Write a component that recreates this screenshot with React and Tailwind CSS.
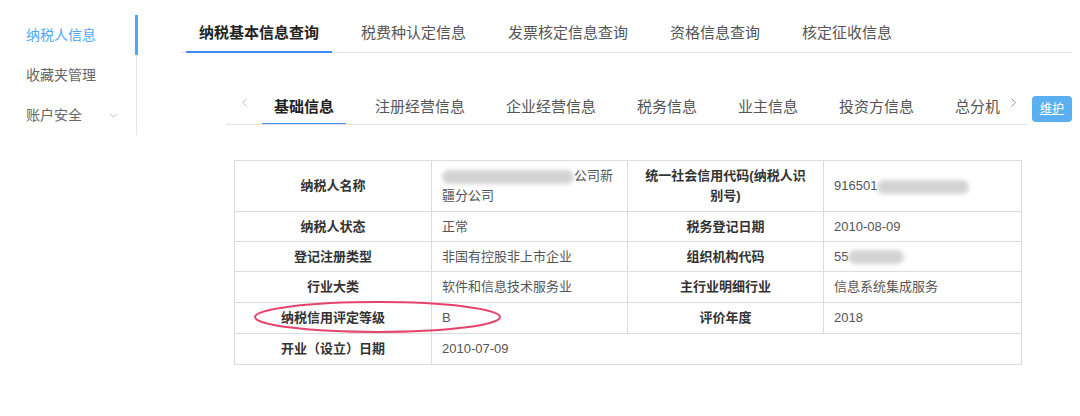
import { ChevronDown, ChevronLeft, ChevronRight } from 'lucide-react'

const FONT = { fontFamily: '"Liberation Sans", "Noto Sans CJK SC", sans-serif' }

const SIDE = [
  { label: '纳税人信息', active: true },
  { label: '收藏夹管理' },
  { label: '账户安全', chevron: true },
]

const TOP_TABS = ['纳税基本信息查询', '税费种认定信息', '发票核定信息查询', '资格信息查询', '核定征收信息']
const SUB_TABS = ['基础信息', '注册经营信息', '企业经营信息', '税务信息', '业主信息', '投资方信息', '总分机构信息']

// blurred stand-in for masked text
function Blur({ w }) {
  return <span className="inline-block h-[14px] align-middle rounded-full bg-[#c9c9c9] blur-[2px] opacity-80" style={{ width: w }} />
}

const label = 'border border-[#dcdcdc] px-[15px] text-center font-bold text-[#333]'
const value = 'border border-[#dcdcdc] px-[10px] text-left text-[#555]'

export default function App() {
  return (
    <div className="flex w-[1080px] h-[416px] bg-white overflow-hidden" style={FONT}>
      {/* Sidebar */}
      <div className="w-[137px] shrink-0 pt-[15px]">
        <div className="border-r border-[#e6e6e6]">
          {SIDE.map(s => (
            <div key={s.label} className={`relative h-[40px] flex items-center pl-[26px] pr-[16px] text-[14px] ${s.active ? 'text-[#4ba9f2]' : 'text-[#666]'}`}>
              {s.label}
              {s.chevron && <ChevronDown size={13} strokeWidth={1.5} className="ml-auto text-[#aaa]" />}
              {s.active && <span className="absolute right-[-2px] top-0 h-full w-[3px] bg-[#4ba9f2]" />}
            </div>
          ))}
        </div>
      </div>

      {/* Main */}
      <div className="flex-1">
        <div className="ml-[44px] w-[891px] flex gap-[16px] pl-[5px] border-b border-[#e4e4e4]">
          {TOP_TABS.map((t, i) => (
            <div key={t} className={`-mb-px px-[13px] pt-[23px] pb-[8px] leading-[20px] text-[15px] border-b-2 ${i === 0 ? 'border-[#3d8ef2] text-[#222] font-bold' : 'border-transparent text-[#555]'}`}>
              {t}
            </div>
          ))}
        </div>

        <div className="mt-[31px] ml-[89px] flex items-start">
          <div className="w-[801px] flex border-b border-[#e4e4e4]">
            <div className="w-[36px] shrink-0 flex items-center justify-center pb-[4px]">
              <ChevronLeft size={15} strokeWidth={1.5} className="text-[#bbb]" />
            </div>
            <div className="w-[738px] overflow-hidden">
              <div className="flex gap-[17px] w-max">
                {SUB_TABS.map((t, i) => (
                  <div key={t} className={`-mb-px px-[12px] pt-[13px] pb-[6px] leading-[20px] text-[15px] border-b-2 ${i === 0 ? 'border-[#3d8ef2] text-[#222] font-bold' : 'border-transparent text-[#555]'}`}>
                    {t}
                  </div>
                ))}
              </div>
            </div>
            <div className="w-[27px] shrink-0 flex items-center justify-center pb-[4px]">
              <ChevronRight size={15} strokeWidth={1.5} className="text-[#888]" />
            </div>
          </div>
          <button className="ml-[5px] mt-[12px] w-[40px] h-[26px] rounded-[4px] bg-[#5aaff0] text-white text-[12px] underline">
            维护
          </button>
        </div>

        {/* Info table */}
        <div className="relative mt-[35px] ml-[97px] w-[787px]">
          <table className="w-[787px] table-fixed border-collapse text-[13px] leading-[20px]">
            <colgroup>
              <col className="w-[197px]" />
              <col className="w-[196px]" />
              <col className="w-[196px]" />
              <col className="w-[198px]" />
            </colgroup>
            <tbody>
              <tr className="h-[51px]">
                <td className={label}>纳税人名称</td>
                <td className={value}><Blur w={132} />公司新疆分公司</td>
                <td className={label}>统一社会信用代码(纳税人识别号)</td>
                <td className={value}>916501<Blur w={92} /></td>
              </tr>
              <tr className="h-[30px]">
                <td className={label}>纳税人状态</td>
                <td className={value}>正常</td>
                <td className={label}>税务登记日期</td>
                <td className={value}>2010-08-09</td>
              </tr>
              <tr className="h-[30px]">
                <td className={label}>登记注册类型</td>
                <td className={value}>非国有控股非上市企业</td>
                <td className={label}>组织机构代码</td>
                <td className={value}>55<Blur w={56} /></td>
              </tr>
              <tr className="h-[31px]">
                <td className={label}>行业大类</td>
                <td className={value}>软件和信息技术服务业</td>
                <td className={label}>主行业明细行业</td>
                <td className={value}>信息系统集成服务</td>
              </tr>
              <tr className="h-[31px]">
                <td className={label}>纳税信用评定等级</td>
                <td className={value}>B</td>
                <td className={label}>评价年度</td>
                <td className={value}>2018</td>
              </tr>
              <tr className="h-[31px]">
                <td className={label}>开业（设立）日期</td>
                <td className={value} colSpan={3}>2010-07-09</td>
              </tr>
            </tbody>
          </table>
          {/* red annotation ellipse */}
          <svg className="absolute left-0 top-0 pointer-events-none" width="787" height="210">
            <ellipse cx="143.5" cy="157" rx="122.5" ry="15" fill="none" stroke="#e5436b" strokeWidth="2" />
          </svg>
        </div>
      </div>
    </div>
  )
}
